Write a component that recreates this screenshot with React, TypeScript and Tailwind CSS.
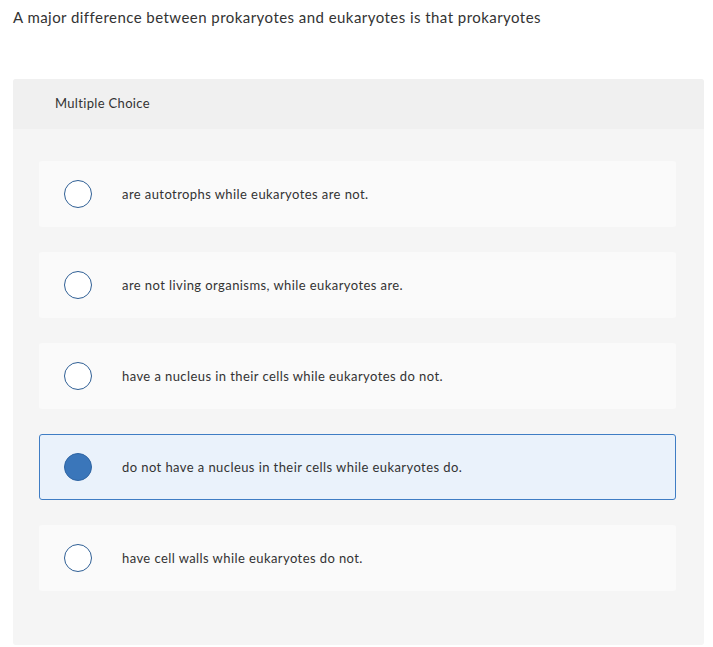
import React, { useState } from 'react'

const options = [
  'are autotrophs while eukaryotes are not.',
  'are not living organisms, while eukaryotes are.',
  'have a nucleus in their cells while eukaryotes do not.',
  'do not have a nucleus in their cells while eukaryotes do.',
  'have cell walls while eukaryotes do not.',
]

export default function App() {
  const [selected, setSelected] = useState(3)

  return (
    <div className="min-h-screen bg-white font-['Lato','Liberation_Sans',sans-serif] text-[#333]">
      <p className="pl-[13px] pt-[7px] text-[15px] leading-[20px] tracking-[0.45px] text-[#333]">
        A major difference between prokaryotes and eukaryotes is that prokaryotes
      </p>

      <div className="ml-[13px] mt-[52px] w-[691px] rounded-[3px] bg-[#f5f5f5] pb-[54px]">
        <div className="flex h-[50px] items-center rounded-t-[3px] bg-[#f0f0f0] pl-[42px] text-[13px] tracking-[0.33px] text-[#333]">
          Multiple Choice
        </div>

        <div className="flex flex-col gap-[25px] pl-[26px] pt-[32px]">
          {options.map((text, i) => {
            const isSelected = i === selected
            return (
              <button
                key={i}
                type="button"
                onClick={() => setSelected(i)}
                className={
                  isSelected
                    ? 'flex h-[66px] w-[637px] items-center rounded-[3px] border border-[#3f7dc4] bg-[#eaf2fb] text-left'
                    : 'flex h-[66px] w-[637px] items-center rounded-[3px] border border-transparent bg-[#fafafa] text-left'
                }
              >
                <span
                  className={
                    isSelected
                      ? 'ml-[24px] h-[28px] w-[28px] shrink-0 rounded-full border-[1.5px] border-[#2f65a3] bg-[#3a76ba]'
                      : 'ml-[24px] h-[28px] w-[28px] shrink-0 rounded-full border-[1.5px] border-[#2f5f95] bg-white'
                  }
                />
                <span className="ml-[30px] pt-px text-[13px] tracking-[0.42px] text-[#333]">{text}</span>
              </button>
            )
          })}
        </div>
      </div>
    </div>
  )
}
